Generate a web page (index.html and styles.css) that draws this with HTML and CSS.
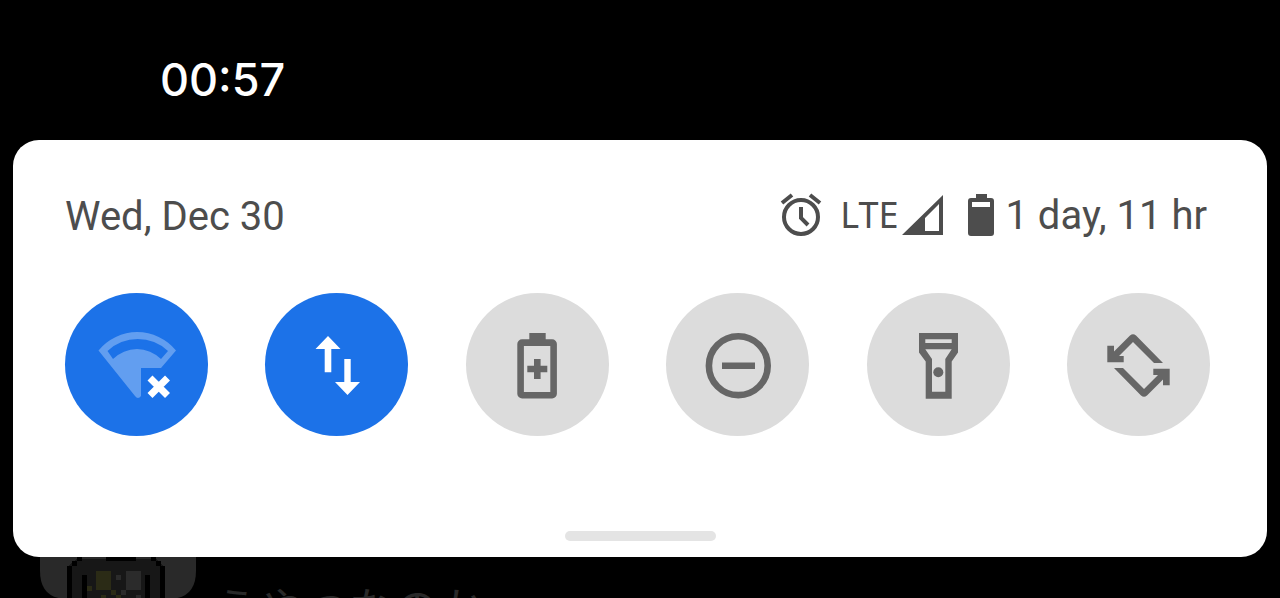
FILE: index.html
```html
<!doctype html>
<html lang="en">
<head>
	<meta charset="UTF-8">
	<meta name="viewport" content="width=device-width, initial-scale=1">
	<title>Quick settings</title>
	<link rel="stylesheet" href="styles.css">
</head>
<body>
	<header class="topbar">
		<time class="clock">00:57</time>
	</header>

	<main class="panel">
		<div class="status">
			<span class="date">Wed, Dec 30</span>
			<div class="status-icons">
				<svg class="alarm" width="42" height="44" viewBox="0 0 42 44" fill="none" stroke="#4d4d4d" stroke-width="4">
					<circle cx="21" cy="24" r="17"/>
					<path d="M21 14v11l7 7M2 10l10-8M40 10l-10-8"/>
				</svg>
				<span class="network">LTE</span>
				<svg class="signal" width="42" height="42" viewBox="0 0 42 42" fill="#4d4d4d">
					<path fill-rule="evenodd" d="M0 41L41 1V41ZM23 24V37H37V10Z"/>
				</svg>
				<svg class="battery" width="26" height="42" viewBox="0 0 26 42" fill="#4d4d4d">
					<path fill-rule="evenodd" d="M8 0h11v4h4q3 0 3 3v32q0 3-3 3H3q-3 0-3-3V7q0-3 3-3h5zM4 8v5h18V8z"/>
				</svg>
				<span class="remaining">1 day, 11 hr</span>
			</div>
		</div>

		<div class="tiles">
			<button class="tile on" type="button" aria-label="Wi-Fi">
				<svg viewBox="0 0 80 80">
					<path fill="#629ef0" fill-rule="evenodd" d="M1.5 25.5A50 50 0 0 1 79 25.5L64 43H44V71Q41 75 38 71ZM10.5 26L16 34A34 34 0 0 1 64 34L71 26A44 44 0 0 0 10.5 26Z"/>
					<path stroke="#fff" stroke-width="7" d="M53 53l17.500 17.500M70.500 53L53 70.500"/>
				</svg>
			</button>
			<button class="tile on" type="button" aria-label="Mobile data">
				<svg viewBox="0 0 80 80">
					<path fill="#fff" d="M31 11L43.500 24H34.300V47.300H27.700V24H18.500ZM50.500 70L38 57H47.300V34H53.700V57H63Z"/>
				</svg>
			</button>
			<button class="tile" type="button" aria-label="Battery saver">
				<svg viewBox="0 0 80 80">
					<rect x="23.600" y="17.600" width="33" height="52.600" rx="1.500" fill="none" stroke="#666" stroke-width="6.600"/>
					<path fill="#666" d="M32.300 8h16.400v8H32.300z"/>
					<path stroke="#666" stroke-width="6.600" d="M30.300 44h20M40.300 34v20"/>
				</svg>
			</button>
			<button class="tile" type="button" aria-label="Do not disturb">
				<svg viewBox="0 0 80 80" fill="none" stroke="#666" stroke-width="6.600">
					<circle cx="40.300" cy="40.700" r="29.400"/>
					<path d="M24 40.700h33"/>
				</svg>
			</button>
			<button class="tile" type="button" aria-label="Flashlight">
				<svg viewBox="0 0 80 80" fill="#666">
					<path fill-rule="evenodd" d="M21 8H60V27.500L53.700 36.500V73.700H27.700V36.500L21 27.500ZM27.300 14.300V18H53.700V14.300ZM27.300 24.300L34 34V66.700H47.300V34L53.700 24.300Z"/>
					<circle cx="40.300" cy="47.300" r="5"/>
				</svg>
			</button>
			<button class="tile" type="button" aria-label="Auto-rotate">
				<svg viewBox="0 0 80 80" fill="#666">
					<path id="turn" d="M9.300 20.700H16V26.500L32 10.500Q35 8 38 10.500L65 38H56L35 17L21 31H25.700V37.300H9.300Z"/>
					<use href="#turn" transform="rotate(180 40.500 40.500)"/>
				</svg>
			</button>
		</div>

		<div class="handle"></div>
	</main>

	<!-- dimmed notification under the shade -->
	<section class="behind">
		<svg class="avatar" width="156" height="42" viewBox="0 0 156 42" shape-rendering="crispEdges">
			<path shape-rendering="auto" fill="#292929" d="M0 0H156V14Q156 42 128 42H28Q0 42 0 14Z"/>
			<path fill="#171717" d="M37 2H116L124 9V42H28V9Z"/>
			<path fill="#000" d="M66 0h30v4H66zM37 0h5v4h-5zM32 4h5v5h-5zM27 9h5v33h-5zM42 18h5v24h-5zM111 0h5v4h-5zM116 4h5v5h-5zM120 9h5v33h-5zM105 18h5v24h-5z"/>
			<path fill="#2b2b16" d="M56 14h15v19H56zM47 29h5v5h-5zM71 33h5v5h-5zM76 38h5v4h-5zM61 38h5v4h-5z"/>
			<path fill="#2b2b2b" d="M86 14h15v19H86zM76 18h5v5h-5zM81 33h5v5h-5zM96 38h5v4h-5z"/>
		</svg>
		<p class="message" lang="ja">うやつなのか</p>
	</section>
</body>
</html>
```
FILE: styles.css
```css
*{
	margin:0;
	padding:0;
	box-sizing:border-box;
}

body{
	background:#000;
	color:#4d4d4d;
	font-family:Roboto, "Liberation Sans", sans-serif;
	min-height:100vh;
	display:flex;
	flex-direction:column;
	overflow:hidden;
}

svg{
	display:block;
	flex:none;
}

.topbar{
	height:140px;
	padding:50px 160px 0;
}

.clock{
	display:block;
	color:#fff;
	font:500 45px/60px Inter, sans-serif;
}

/* white shade */
.panel{
	margin:0 13px;
	padding:48px 0 16px;
	background:#fff;
	border-radius:26px;
}

.status,
.tiles{
	display:flex;
	justify-content:space-between;
	padding:0 57px 0 52px;
}

.status{
	align-items:center;
	height:56px;
	font-size:40px;
	line-height:56px;
	white-space:nowrap;
}

.date,
.remaining{
	padding-top:2px;
}

.status-icons{
	display:flex;
	align-items:center;
	padding:0 3px 2px 0;
}

.network{
	margin:0 4px 0 18px;
	font-family:"Noto Sans", sans-serif;
	font-size:36px;
}

.battery{
	margin:0 11px 0 24px;
}

.tiles{
	margin-top:49px;
}

.tile{
	display:flex;
	align-items:center;
	justify-content:center;
	width:143px;
	height:143px;
	border:0;
	border-radius:50%;
	background:#dcdcdc;
}

.tile.on{
	background:#1c72e8;
}

.tile svg{
	width:80px;
	height:80px;
}

.handle{
	width:151px;
	height:10px;
	margin:95px auto 0;
	border-radius:5px;
	background:#e4e4e4;
}

.behind{
	display:flex;
	gap:18px;
	height:41px;
	padding-left:40px;
	overflow:hidden;
}

.message{
	padding-top:22px;
	color:#292929;
	font:45px/56px "Noto Sans CJK JP", sans-serif;
}
```
